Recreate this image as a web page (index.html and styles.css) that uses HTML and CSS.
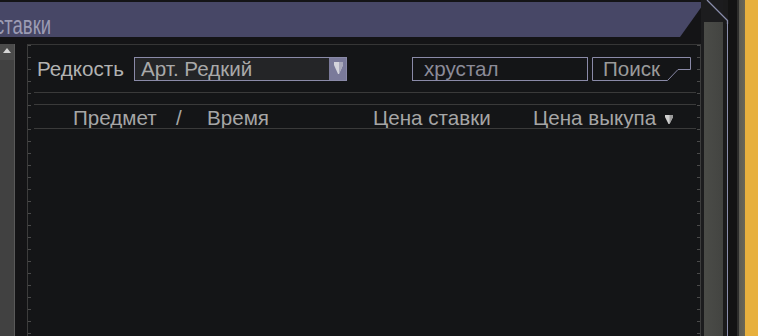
FILE: index.html
```html
<!DOCTYPE html>
<html lang="ru">
<head>
<meta charset="utf-8">
<title>Аукцион</title>
<link rel="stylesheet" href="styles.css">
</head>
<body>
<div class="window">
  <div class="main">
    <div class="titlebar"><span class="title">ставки</span></div>
    <div class="body">
      <div class="lscroll">
        <div class="up-btn">
          <svg width="8" height="5" viewBox="0 0 8 5"><polygon points="4,0 8,5 0,5" fill="#d6d6d6"/></svg>
        </div>
      </div>
      <div class="panel">
        <div class="filters">
          <span class="label">Редкость</span>
          <div class="select">
            <span class="select-value">Арт. Редкий</span>
            <span class="select-btn">
              <svg width="9" height="12" viewBox="0 0 9 12"><polygon points="0,0 9,0 9,3 5,12 4,12 0,3" fill="#d4d4dc"/><polygon points="5,0 9,0 9,3 5,12" fill="#a9a9bb"/></svg>
            </span>
          </div>
          <div class="search">хрустал</div>
          <div class="btn">Поиск
            <svg class="btn-frame" width="99" height="24" viewBox="0 0 99 24"><path d="M0.5 0.5 H98.5 V12.5 H86 L75.5 23.5 H0.5 Z" fill="none" stroke="#8a8aa8" stroke-width="1"/></svg>
          </div>
        </div>
        <div class="rule rule-a"></div>
        <div class="rule rule-b"></div>
        <div class="thead">
          <span>Предмет</span>
          <span>/</span>
          <span>Время</span>
          <span>Цена ставки</span>
          <span class="sorted">Цена выкупа
            <svg width="8" height="9" viewBox="0 0 8 9"><polygon points="0,0 8,0 8,2 4.5,9 3.5,9 0,2" fill="#cfcfcf"/><polygon points="4.5,0 8,0 8,2 4.5,9" fill="#9a9a9a"/></svg>
          </span>
        </div>
        <div class="rule"></div>
      </div>
    </div>
  </div>
  <div class="rframe">
    <div class="strip s-dark"></div>
    <div class="strip vscroll"></div>
    <div class="strip s-dark2"></div>
    <div class="strip s-line"></div>
    <div class="strip s-black"></div>
    <div class="strip s-edge"></div>
    <div class="strip s-olive"></div>
    <div class="strip s-gold"></div>
    <svg class="corner-line" width="30" height="24" viewBox="0 0 30 24"><path d="M6 0 L26.5 20.5 V24" fill="none" stroke="#8a8eac" stroke-width="1.3"/></svg>
  </div>
</div>
</body>
</html>
```

FILE: styles.css
```css
* { box-sizing: border-box; }
html, body { margin: 0; padding: 0; }
body {
  width: 758px;
  height: 336px;
  overflow: hidden;
  background: #121213;
  font-family: "Liberation Sans", Arial, sans-serif;
}
.window {
  display: flex;
  width: 758px;
  height: 336px;
}
.main {
  width: 701px;
  display: flex;
  flex-direction: column;
  background: #141416;
}
.titlebar {
  margin-top: 2px;
  height: 35px;
  width: 705px;
  flex: none;
  background: #474766;
  clip-path: polygon(0 0, 100% 0, calc(100% - 25px) 100%, 0 100%);
  padding-top: 17px;
  overflow: hidden;
  white-space: nowrap;
}
.title {
  display: inline-block;
  margin-left: -5px;
  font-size: 18.5px;
  line-height: 17px;
  color: #9c9cb4;
  transform: scaleY(1.35);
  transform-origin: 0 14px;
}
.body {
  flex: 1;
  display: flex;
  padding-top: 7px;
  min-height: 0;
}
.lscroll {
  width: 15px;
  background: #414141;
  border-right: 1px solid #5a5a5a;
}
.up-btn {
  height: 16px;
  background: #4b4b4b;
  display: flex;
  justify-content: center;
  padding-top: 4px;
  padding-right: 1px;
}
.panel {
  flex: 1;
  margin-left: 12px;
  border-left: 1px solid #3c3c3c;
  border-right: 1px solid #3c3c3c;
  border-top: 1px solid #363636;
  background:
    repeating-linear-gradient(to bottom, #4a4a4a 0 1px, transparent 1px 12px) left top / 3px 100% no-repeat,
    repeating-linear-gradient(to bottom, #4a4a4a 0 1px, transparent 1px 12px) right top / 3px 100% no-repeat,
    #141517;
  display: flex;
  flex-direction: column;
  font-size: 20.6px;
}
.filters {
  margin-top: 12px;
  height: 24px;
  padding-left: 9px;
  display: flex;
  align-items: center;
}
.label {
  width: 97px;
  color: #b2b2b2;
  line-height: 24px;
}
.select {
  width: 213px;
  height: 24px;
  border: 1px solid #8a8aa8;
  background: #242527;
  display: flex;
}
.select-value {
  flex: 1;
  padding-left: 6px;
  color: #a9a9a9;
  line-height: 22px;
}
.select-btn {
  width: 17px;
  background: #7a7a9a;
  display: flex;
  justify-content: center;
  padding-top: 4px;
  padding-left: 1px;
}
.search {
  margin-left: 65px;
  width: 176px;
  height: 24px;
  border: 1px solid #8a8aa8;
  padding-left: 11px;
  color: #8b8b98;
  line-height: 22px;
}
.btn {
  position: relative;
  margin-left: 4px;
  width: 99px;
  height: 24px;
  padding-left: 11px;
  color: #9a9a9a;
  line-height: 24px;
}
.btn-frame {
  position: absolute;
  left: 0;
  top: 0;
}
.rule {
  height: 1px;
  margin: 0 4px 0 6px;
  background: #3a3a3a;
  flex: none;
}
.rule-a { margin-top: 11px; }
.rule-b { margin-top: 11px; }
.thead {
  height: 23px;
  padding-left: 45px;
  padding-top: 3px;
  display: grid;
  grid-template-columns: 103px 31px 166px 160px auto;
  color: #a6a6a6;
  line-height: 20px;
  white-space: nowrap;
}
.sorted svg {
  margin-left: 3px;
  vertical-align: 1px;
}
.rframe {
  position: relative;
  width: 57px;
  display: flex;
  height: 336px;
}
.strip { height: 100%; flex: none; }
.s-dark { width: 3px; background: #1c1c1e; }
.vscroll {
  width: 19px;
  background: linear-gradient(to bottom, #1c1c1e 0 22px, transparent 22px),
              linear-gradient(to right, #4b4c48, #434441);
}
.s-dark2 { width: 4px; background: #1b1b1c; }
.s-line {
  width: 1px;
  background: linear-gradient(to bottom, #1b1b1c 0 20px, #8a8eac 20px);
}
.s-black { width: 9px; background: #131313; }
.s-edge { width: 2px; background: #2e2e2c; }
.s-olive { width: 6px; background: linear-gradient(to right, #5c5c54, #6a6656); }
.s-gold { width: 13px; background: #e7b03e; }
.corner-line {
  position: absolute;
  left: 0;
  top: 0;
}
```
